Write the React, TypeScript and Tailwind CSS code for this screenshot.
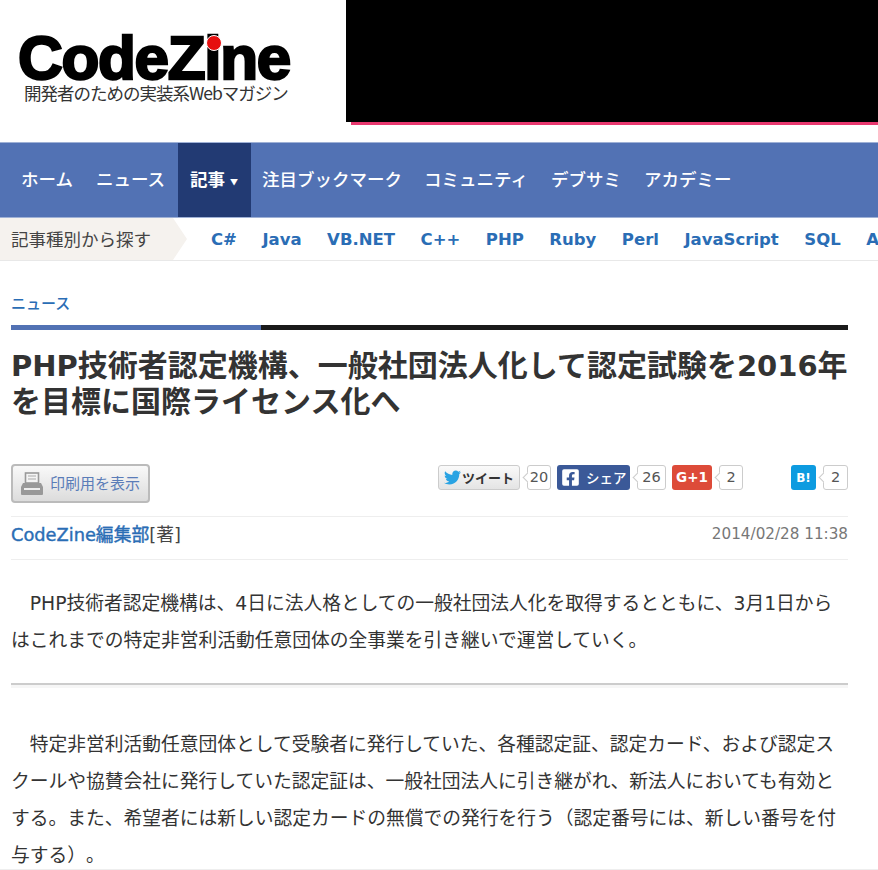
import React from "react";
import { FaTwitter, FaFacebookSquare } from "react-icons/fa";

const jp = "font-['Noto_Sans_CJK_JP','Noto_Sans',sans-serif]";
const latin = "font-['DejaVu_Sans','Noto_Sans_CJK_JP',sans-serif]";

function Count({ n, w }: { n: string; w: string }) {
  return (
    <span className={`relative ml-[7px] flex h-[25px] ${w} items-center justify-center rounded-[3px] border border-[#ccc] bg-white text-[14.5px] text-[#555]`}>
      <span className="absolute -left-[4px] top-[8px] h-[7px] w-[7px] rotate-45 border-b border-l border-[#ccc] bg-white" />
      {n}
    </span>
  );
}

export default function App() {
  const langs = ["C#", "Java", "VB.NET", "C++", "PHP", "Ruby", "Perl", "JavaScript", "SQL", "ASP.NET"];
  return (
    <div className={`h-[870px] w-[878px] overflow-hidden border-b border-[#eee] bg-white ${latin} text-[#333]`}>
      <header className="flex h-[142px] items-start">
        <div className={`w-[346px] pl-[18px] pt-[29px] ${jp}`}>
          <div className="relative h-[58px] w-[280px]">
            <span className="block whitespace-nowrap font-['Liberation_Sans',sans-serif] text-[62px] font-bold leading-[58px] tracking-[-1.3px] text-black [-webkit-text-stroke:2.4px_#000]">CodeZine</span>
            <span className="absolute left-[188px] top-[6px] h-[16px] w-[16px] rounded-full border border-white bg-[#e60f0f]" />
          </div>
          <div className="ml-[6px] mt-[-4px] whitespace-nowrap text-[17.5px] leading-[20px] tracking-[-1px] text-[#333]">開発者のための実装系Webマガジン</div>
        </div>
        <div className="flex-1">
          <div className="h-[122px] bg-black" />
          <div className="ml-[5px] h-[3px] bg-[#e8386f]" />
        </div>
      </header>

      <nav className={`flex h-[76px] items-stretch border-y border-[#9fb1d6] bg-[#5272b4] text-[17.5px] font-medium leading-none text-white ${jp}`}>
        <a className="ml-[21px] flex items-center whitespace-nowrap pb-[2px]">ホーム</a>
        <a className="ml-[23px] flex items-center whitespace-nowrap pb-[2px]">ニュース</a>
        <a className="ml-[13px] flex w-[73px] items-center whitespace-nowrap bg-[#223a73] pb-[2px] pl-[12px] font-bold">
          記事<span className="ml-[5px] mt-[5px] text-[8px]">▼</span>
        </a>
        <a className="ml-[11px] flex items-center whitespace-nowrap pb-[2px]">注目ブックマーク</a>
        <a className="ml-[22px] flex items-center whitespace-nowrap pb-[2px]">コミュニティ</a>
        <a className="ml-[23px] flex items-center whitespace-nowrap pb-[2px]">デブサミ</a>
        <a className="ml-[23px] flex items-center whitespace-nowrap pb-[2px]">アカデミー</a>
      </nav>

      <div className="flex h-[43px] items-stretch overflow-hidden border-b border-[#e8e8e8]">
        <div className={`flex w-[187px] shrink-0 items-center whitespace-nowrap bg-[#f5f2ee] pl-[11px] text-[17.5px] text-[#444] [clip-path:polygon(0_0,173px_0,187px_50%,173px_100%,0_100%)] ${jp}`}>記事種別から探す</div>
        <div className="ml-[24px] flex items-center gap-[25.5px] whitespace-nowrap pt-[3px] text-[16.5px] font-bold text-[#2a6db5]">
          {langs.map((l) => (
            <a key={l}>{l}</a>
          ))}
        </div>
      </div>

      <main className="px-[11px]">
        <div className={`pt-[31px] text-[15px] font-medium leading-[22px] text-[#2a6db5] ${jp}`}>ニュース</div>
        <div className="mt-[11px] flex h-[5px] w-[837px]">
          <div className="w-[250px] bg-[#5272b4]" />
          <div className="flex-1 bg-[#1a1a1a]" />
        </div>
        <h1 className="mt-[18px] w-[840px] text-[30px] font-bold leading-[36px] text-[#333]">
          <span className="text-[29px]">PHP</span>技術者認定機構、一般社団法人化して認定試験を<span className="text-[29px]">2016</span>年を目標に国際ライセンス化へ
        </h1>

        <div className="mt-[43px] flex h-[38px] w-[837px] items-start">
          <button className={`mt-[1px] flex h-[39px] w-[139px] shrink-0 items-center rounded-[4px] border-2 border-[#bbb] bg-gradient-to-b from-[#f9f9f9] to-[#dcdcdc] pl-[7px] text-[15px] text-[#5a7cb8] ${jp}`}>
            <svg width="24" height="24" viewBox="0 0 24 24" className="shrink-0">
              <rect x="5.5" y="1" width="13" height="10" fill="#f4f4f4" stroke="#999" strokeWidth="1.6" />
              <path d="M8 4h8M8 7h8" stroke="#aaa" strokeWidth="1.2" />
              <path d="M3 11h18l2 4v7a1 1 0 0 1-1 1H2a1 1 0 0 1-1-1v-7z" fill="#999" />
              <rect x="4" y="16" width="16" height="2" fill="#eee" />
            </svg>
            <span className="ml-[6px] whitespace-nowrap">印刷用を表示</span>
          </button>
          <div className="ml-[288px] mt-[2px] flex shrink-0 items-start">
            <span className="flex h-[25px] w-[82px] items-center rounded-[3px] border border-[#ccc] bg-gradient-to-b from-[#fafafa] to-[#e4e4e4] pl-[5px] text-[#333]">
              <FaTwitter className="shrink-0 text-[17px] text-[#29a3e3]" />
              <span className={`ml-[1px] whitespace-nowrap text-[13px] font-bold ${jp}`}>ツイート</span>
            </span>
            <Count n="20" w="w-[24px]" />
            <span className="ml-[6px] flex h-[25px] w-[73px] items-center rounded-[3px] bg-[#3b5998] pl-[4px] text-white">
              <FaFacebookSquare className="shrink-0 text-[19px]" />
              <span className={`ml-[6px] whitespace-nowrap text-[13.5px] font-medium ${jp}`}>シェア</span>
            </span>
            <Count n="26" w="w-[29px]" />
            <span className="ml-[6px] flex h-[25px] w-[40px] items-center justify-center rounded-[3px] bg-[#dd4b39] text-[13.5px] font-bold text-white">G+1</span>
            <Count n="2" w="w-[24px]" />
            <span className="ml-[48px] flex h-[25px] w-[25px] items-center justify-center rounded-[3px] bg-[#0d9be0] text-[12px] font-bold text-white">B!</span>
            <Count n="2" w="w-[25px]" />
          </div>
        </div>

        <div className="mt-[15px] flex h-[44px] w-[837px] items-center justify-between border-y border-[#eee] pb-[5px]">
          <div className="text-[17.8px]">
            <span className="text-[#2a6db5] [-webkit-text-stroke:0.4px_#2a6db5]">CodeZine編集部</span>
            <span className="text-[#444]">[著]</span>
          </div>
          <div className="pb-[2px] text-[15.2px] text-[#777]">2014/02/28 11:38</div>
        </div>

        <p className="mt-[25px] w-[838px] indent-[18.75px] text-[18.75px] leading-[37px] text-[#333] [text-spacing-trim:space-all]">
          PHP技術者認定機構は、4日に法人格としての一般社団法人化を取得するとともに、3月1日からはこれまでの特定非営利活動任意団体の全事業を引き継いで運営していく。
        </p>

        <div className="mt-[24px] h-[5px] w-[837px] border-t-2 border-[#ccc] bg-[#f6f6f6]" />

        <p className="mt-[38px] w-[838px] indent-[18.75px] text-[18.75px] leading-[37px] text-[#333] [text-spacing-trim:space-all]">
          特定非営利活動任意団体として受験者に発行していた、各種認定証、認定カード、および認定スクールや協賛会社に発行していた認定証は、一般社団法人に引き継がれ、新法人においても有効とする。また、希望者には新しい認定カードの無償での発行を行う（認定番号には、新しい番号を付与する）。
        </p>
      </main>
    </div>
  );
}
